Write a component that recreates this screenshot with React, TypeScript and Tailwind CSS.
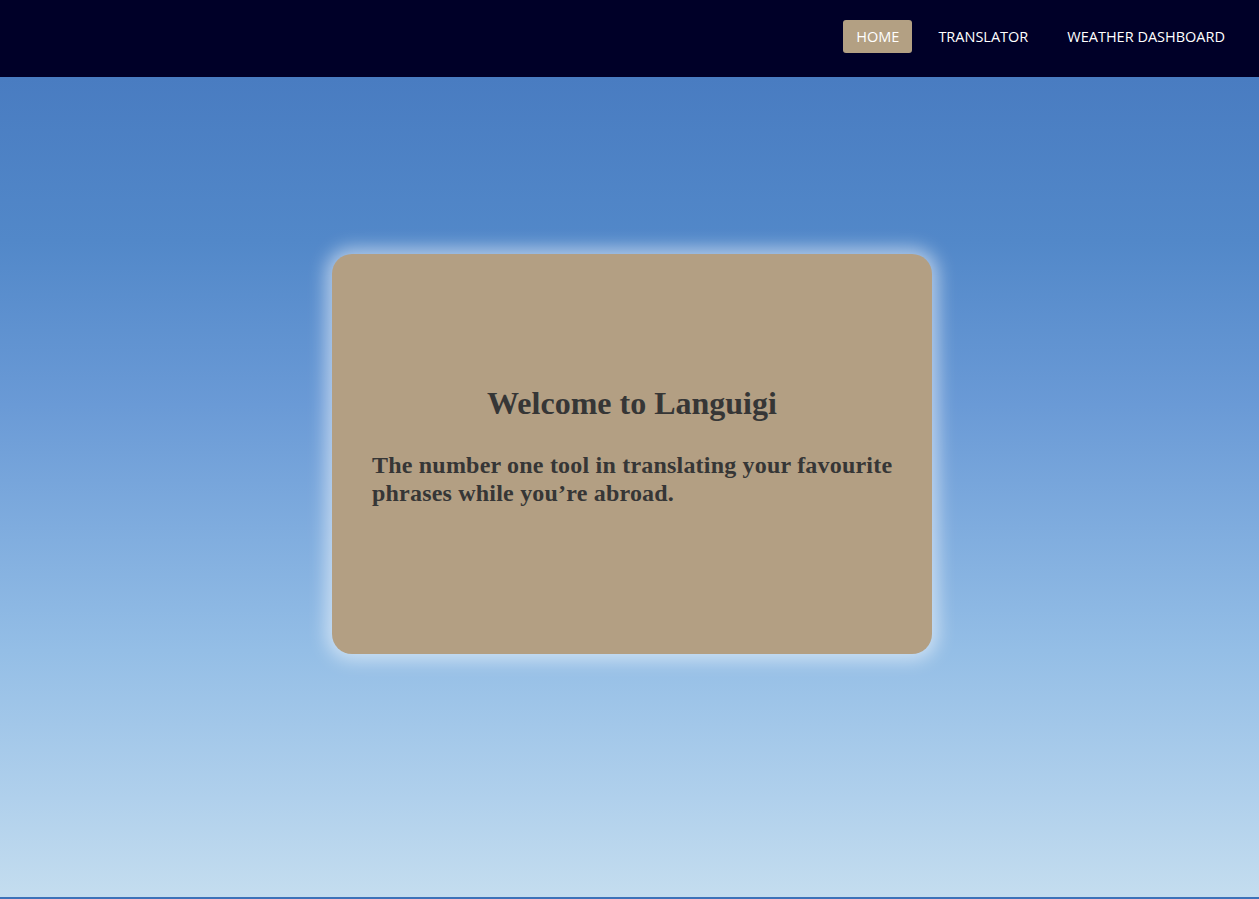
const links = [
  { label: "HOME", active: true },
  { label: "TRANSLATOR", active: false },
  { label: "WEATHER DASHBOARD", active: false },
]

export default function App() {
  return (
    <div className="flex min-h-screen flex-col">
      <nav className="flex h-[77px] items-center justify-end gap-[13px] bg-[#000028] pr-[21px] font-['Open_Sans',sans-serif]">
        {links.map((link) => (
          <a
            key={link.label}
            href="#"
            className={
              link.active
                ? "mb-[4px] rounded-[3px] bg-[#b3a083] px-[13px] py-[5.5px] text-[14.5px] text-white"
                : "mb-[4px] px-[13px] py-[5.5px] text-[14.5px] text-white"
            }
          >
            {link.label}
          </a>
        ))}
      </nav>
      <main className="flex flex-1 justify-center border-b-2 border-[#3d72b8] bg-[linear-gradient(to_bottom,#497cc1_0%,#5288c9_20%,#6a9ad6_40%,#94bee6_70%,#b0d0ec_88%,#c4ddef_100%)] pt-[177px] pl-[5px]">
        <div className="flex h-[400px] w-[600px] flex-col justify-center rounded-[20px] bg-[#b39f83] px-[40px] pb-[18px] text-[#363636] shadow-[0_0_18px_6px_rgba(255,255,255,0.55)] font-['Liberation_Serif',serif]">
          <h1 className="text-center text-[32px] font-bold leading-[40px]">Welcome to Languigi</h1>
          <p className="mt-[28px] mr-[-16px] text-[24px] font-bold leading-[28px] tracking-[0.2px]">
            The number one tool in translating your favourite phrases while you’re abroad.
          </p>
        </div>
      </main>
    </div>
  )
}
